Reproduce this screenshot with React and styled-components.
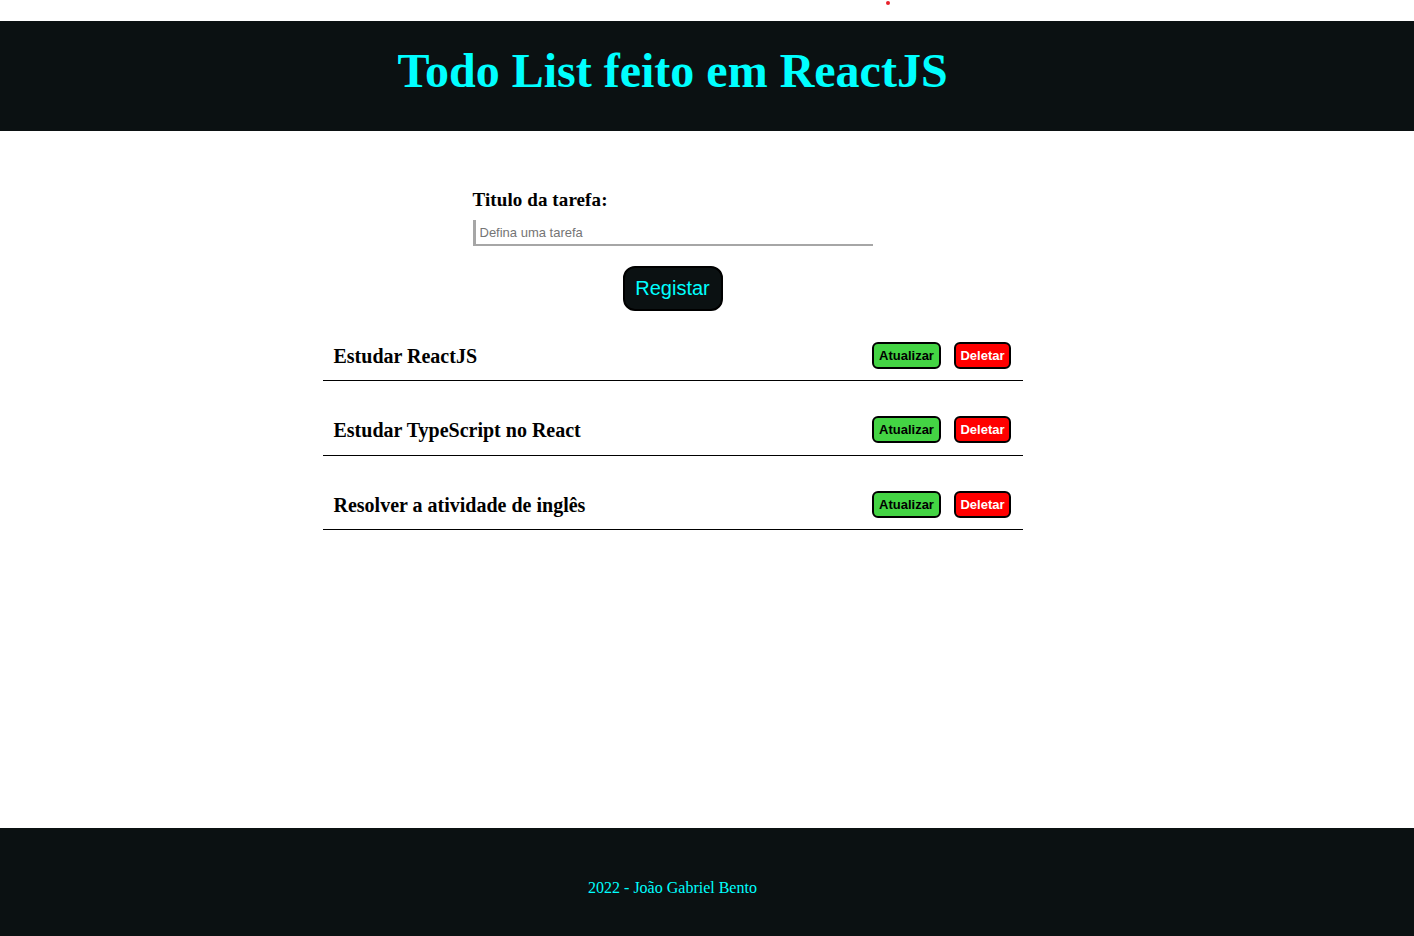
import styled, { createGlobalStyle } from "styled-components";

const GlobalStyle = createGlobalStyle`
    html, body {
        margin: 0;
        padding: 0;
        background: #fff;
    }
    body {
        font-family: "Liberation Serif", "Times New Roman", serif;
    }
`;

const tasks = [
    "Estudar ReactJS",
    "Estudar TypeScript no React",
    "Resolver a atividade de inglês",
];

const App = () => {
    return (
        <Page>
            <GlobalStyle />
            <TopStrip>
                <Dot />
            </TopStrip>
            <Header>
                <Title>Todo List feito em ReactJS</Title>
            </Header>
            <Main>
                <Form onSubmit={(e) => e.preventDefault()}>
                    <Label htmlFor="titulo">Titulo da tarefa:</Label>
                    <Input id="titulo" placeholder="Defina uma tarefa" />
                    <Submit type="submit">Registar</Submit>
                </Form>
                <List>
                    {tasks.map((task) => (
                        <Item key={task}>
                            <TaskName>{task}</TaskName>
                            <Actions>
                                <ActionButton $variant="update">Atualizar</ActionButton>
                                <ActionButton $variant="delete">Deletar</ActionButton>
                            </Actions>
                        </Item>
                    ))}
                </List>
            </Main>
            <Footer>
                <FooterText>2022 - João Gabriel Bento</FooterText>
            </Footer>
        </Page>
    );
};

const Page = styled.div`
    display: flex;
    flex-direction: column;
    min-height: 936px;
`;

const TopStrip = styled.div`
    height: 21px;
    display: flex;
    align-items: flex-start;
`;

const Dot = styled.span`
    width: 4px;
    height: 4px;
    margin: 1px 0 0 886px;
    border-radius: 50%;
    background: #e8212b;
`;

const Header = styled.header`
    height: 110px;
    background: #0b1112;
    display: flex;
    align-items: center;
    justify-content: center;
    padding-right: 69px;
    padding-bottom: 10px;
    box-sizing: border-box;
`;

const Title = styled.h1`
    margin: 0;
    color: #00ffff;
    font-size: 48px;
    font-weight: 700;
    line-height: 1;
`;

const Main = styled.main`
    flex: 1;
    display: flex;
    flex-direction: column;
    align-items: center;
    padding-right: 69px;
    padding-top: 58px;
`;

const Form = styled.form`
    width: 400px;
    display: flex;
    flex-direction: column;
`;

const Label = styled.label`
    font-size: 19px;
    font-weight: 700;
    color: #000;
    margin-bottom: 9px;
    letter-spacing: 0.1px;
`;

const Input = styled.input`
    height: 24px;
    border: none;
    border-left: 3px solid #a6a6a6;
    border-bottom: 2px solid #a6a6a6;
    padding: 0 4px;
    font-family: "Liberation Sans", Arial, sans-serif;
    font-size: 13px;
    outline: none;

    ::placeholder {
        color: #757575;
    }
`;

const Submit = styled.button`
    align-self: center;
    margin-top: 20px;
    width: 100px;
    height: 45px;
    border: 2px solid #000;
    border-radius: 12px;
    background: #0b1112;
    color: #00ffff;
    font-family: "Liberation Sans", Arial, sans-serif;
    font-size: 20px;
    cursor: pointer;
`;

const List = styled.ul`
    list-style: none;
    margin: 17px 0 0;
    padding: 0;
    width: 700px;
    display: flex;
    flex-direction: column;
    gap: 21.5px;
`;

const Item = styled.li`
    height: 53px;
    border-bottom: 1px solid #000;
    display: flex;
    align-items: center;
    justify-content: space-between;
    padding: 2px 12px 0 11px;
    box-sizing: border-box;
`;

const TaskName = styled.span`
    font-size: 20px;
    font-weight: 700;
    color: #000;
    padding-top: 2px;
`;

const Actions = styled.div`
    display: flex;
    gap: 13px;
`;

const ActionButton = styled.button`
    height: 27px;
    padding: ${(p) => (p.$variant === "delete" ? "0 4px" : "0 5.5px")};
    border: 2px solid #000;
    border-radius: 6px;
    font-family: "Liberation Sans", Arial, sans-serif;
    font-size: 13px;
    font-weight: 700;
    cursor: pointer;
    background: ${(p) => (p.$variant === "delete" ? "#ff0000" : "#44d444")};
    color: ${(p) => (p.$variant === "delete" ? "#fff" : "#000")};
`;

const Footer = styled.footer`
    height: 108px;
    background: #0b1112;
    display: flex;
    align-items: center;
    justify-content: center;
    padding-right: 69px;
    padding-top: 12px;
    box-sizing: border-box;
`;

const FooterText = styled.p`
    margin: 0;
    color: #00ffff;
    font-size: 16px;
`;

export default App;
